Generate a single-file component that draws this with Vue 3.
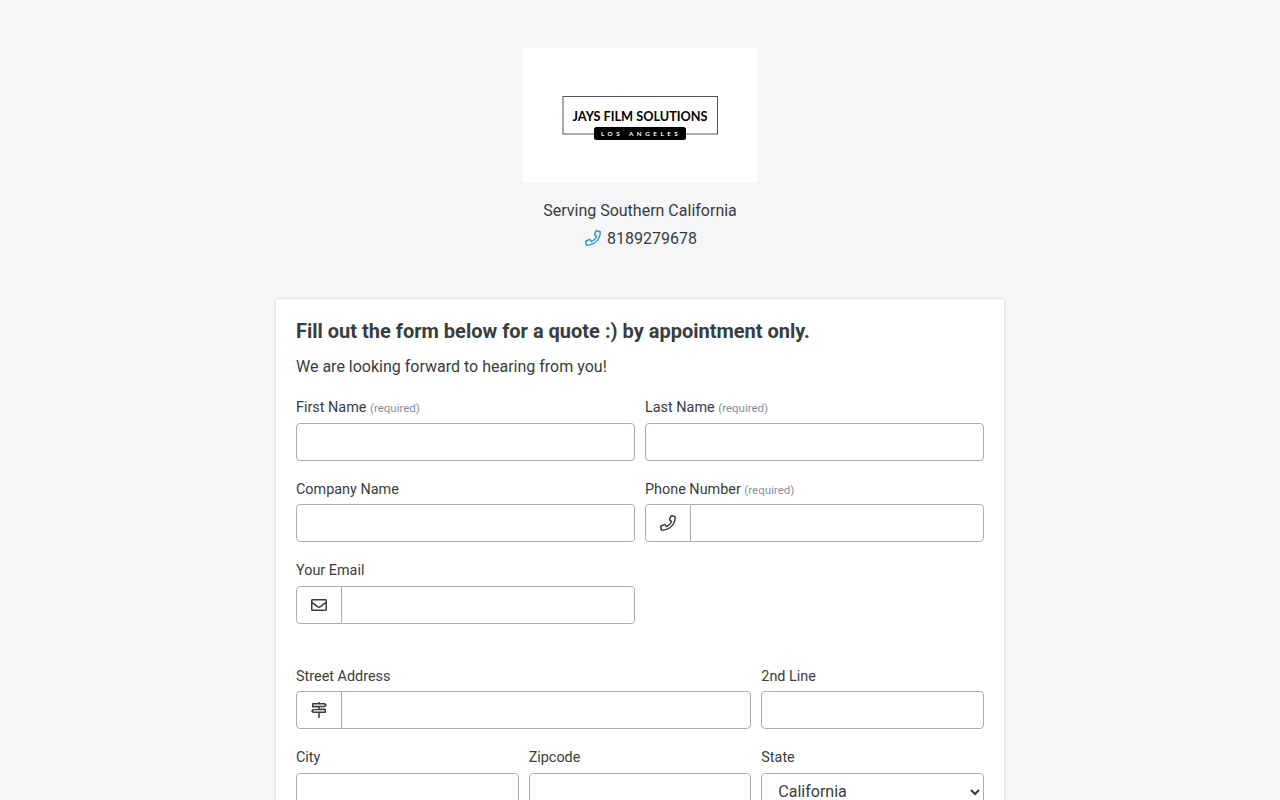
<template>
  <div class="page">
    <header class="brand">
      <svg class="logo" viewBox="0 0 236 135" role="img" aria-label="Jays Film Solutions">
        <rect width="236" height="135" fill="#fff" />
        <rect x="41" y="48.5" width="154.5" height="37.5" fill="none" stroke="#555" stroke-width="1" />
        <text x="50.5" y="73" textLength="135" lengthAdjust="spacingAndGlyphs" class="logo-name">JAYS FILM SOLUTIONS</text>
        <rect x="72" y="79" width="92" height="13" rx="2.5" fill="#000" />
        <text x="79" y="88" class="logo-city">LOS</text>
        <text x="107" y="88" class="logo-city">ANGELES</text>
      </svg>
      <div class="line">Serving Southern California</div>
      <div class="line phone">
        <svg class="icon blue" viewBox="0 0 512 512"><path :d="icons.phone" /></svg>
        <span>8189279678</span>
      </div>
    </header>

    <form class="card" @submit.prevent>
      <h1>Fill out the form below for a quote :) by appointment only.</h1>
      <p>We are looking forward to hearing from you!</p>

      <div v-for="(row, i) in rows" :key="i" class="row" :class="{ last: row.gap }">
        <div v-for="f in row.fields" :key="f.name" class="field" :class="'span-' + f.span">
          <label :for="f.name">
            {{ f.label }} <small v-if="f.required">(required)</small>
          </label>
          <select v-if="f.options" :id="f.name" v-model="form[f.name]" class="control">
            <option v-for="o in f.options" :key="o">{{ o }}</option>
          </select>
          <div v-else class="group" :class="{ addon: f.icon }">
            <span v-if="f.icon" class="prepend">
              <svg class="icon" viewBox="0 0 512 512"><path :d="icons[f.icon]" fill-rule="evenodd" /></svg>
            </span>
            <input :id="f.name" v-model="form[f.name]" class="control" type="text" />
          </div>
        </div>
      </div>
    </form>
  </div>
</template>

<script setup>
import { reactive } from "vue";

const icons = {
  phone:
    "M476.5 22.9L382.3 1.2c-21.6-5-43.6 6.2-52.3 26.6l-43.5 101.5c-8 18.6-2.6 40.6 13.1 53.4l40 32.7C311 267.8 267.8 311 215.4 339.5l-32.7-40c-12.8-15.7-34.8-21.1-53.4-13.1L27.7 329.9c-20.4 8.7-31.5 30.7-26.6 52.3l21.7 94.2c4.8 20.9 23.2 35.5 44.6 35.5C312.3 512 512 313.7 512 67.5c0-21.4-14.6-39.8-35.5-44.6zM69.3 464l-20.9-90.7 98.2-42.1 55.7 68.1c98.8-46.4 150.6-98 197-197l-68.1-55.7 42.1-98.2L464 69.3C463 286.9 286.9 463 69.3 464z",
  envelope:
    "M464 64H48C21.49 64 0 85.49 0 112v288c0 26.51 21.49 48 48 48h416c26.51 0 48-21.49 48-48V112c0-26.51-21.49-48-48-48zm0 48v40.805c-22.422 18.259-58.168 46.651-134.587 106.49-16.841 13.247-50.201 45.072-73.413 44.701-23.208.375-56.579-31.459-73.413-44.701C106.18 199.465 70.425 171.067 48 152.805V112h416zM48 400V214.398c22.914 18.251 55.409 43.862 104.938 82.646 21.857 17.205 60.134 55.186 103.062 54.955 42.717.231 80.509-37.199 103.053-54.947 49.528-38.783 82.032-64.401 104.947-82.653V400H48z",
  signs:
    "M232 0h48v32h154c11 0 21 4 28 12l38 40c8 8 8 20 0 28l-38 40c-7 8-17 12-28 12H280v44h168c18 0 32 14 32 32v80c0 18-14 32-32 32H280v160h-48V352H78c-11 0-21-4-28-12l-38-40c-8-8-8-20 0-28l38-40c7-8 17-12 28-12h154v-44H64c-18 0-32-14-32-32V64c0-18 14-32 32-32h168zM80 80v36h340l20-18-20-18zM92 264l-24 20 24 20h340v-40z",
};

const rows = [
  {
    fields: [
      { name: "first", label: "First Name", span: 6, required: true },
      { name: "last", label: "Last Name", span: 6, required: true },
    ],
  },
  {
    fields: [
      { name: "company", label: "Company Name", span: 6 },
      { name: "phone", label: "Phone Number", span: 6, required: true, icon: "phone" },
    ],
  },
  {
    gap: true,
    fields: [{ name: "email", label: "Your Email", span: 6, icon: "envelope" }],
  },
  {
    fields: [
      { name: "street", label: "Street Address", span: 8, icon: "signs" },
      { name: "street2", label: "2nd Line", span: 4 },
    ],
  },
  {
    fields: [
      { name: "city", label: "City", span: 4 },
      { name: "zip", label: "Zipcode", span: 4 },
      { name: "state", label: "State", span: 4, options: ["California", "Nevada", "Oregon"] },
    ],
  },
];

const form = reactive({
  first: "",
  last: "",
  company: "",
  phone: "",
  email: "",
  street: "",
  street2: "",
  city: "",
  zip: "",
  state: "California",
});
</script>

<style>
html,
body {
  margin: 0;
  height: 100%;
  overflow: hidden;
  background: #f4f6f8;
}
</style>

<style scoped>
.page {
  height: 800px;
  overflow: hidden;
  font-family: Roboto, sans-serif;
  font-size: 16px;
  line-height: 24px;
  color: #373d40;
}
.brand {
  display: flex;
  flex-direction: column;
  align-items: center;
  padding-top: 48px;
}
.logo {
  display: block;
  width: 236px;
  height: 135px;
  margin-bottom: 16px;
}
.logo-name {
  font: 700 13.9px Lato, sans-serif;
}
.logo-city {
  font: 700 6.3px Lato, sans-serif;
  letter-spacing: 3.5px;
  fill: #fff;
}
.line {
  margin-bottom: 4px;
}
.phone {
  display: flex;
  align-items: center;
  gap: 6px;
  padding-left: 2px;
}
.icon {
  display: block;
  width: 16px;
  height: 16px;
  fill: currentColor;
}
.blue {
  margin-bottom: 2px;
  color: #3c93cf;
}
.card {
  box-sizing: border-box;
  width: 730px;
  height: 700px;
  margin: 43px auto 0;
  padding: 20px;
  border: 1px solid #e3e5e8;
  border-radius: 4px;
  background: #fff;
  box-shadow: 0 1px 3px rgba(0, 0, 0, 0.08);
}
h1 {
  margin: 0 0 12px;
  font-size: 20px;
  font-weight: 700;
  line-height: 24px;
}
p {
  margin: 0 0 18.2px;
}
.row {
  display: grid;
  grid-template-columns: repeat(12, 1fr);
  column-gap: 10px;
  margin-bottom: 18px;
}
.row.last {
  margin-bottom: 41.6px;
}
.span-4 {
  grid-column: span 4;
}
.span-6 {
  grid-column: span 6;
}
.span-8 {
  grid-column: span 8;
}
label {
  display: block;
  height: 21.6px;
  margin-bottom: 4px;
  font-size: 14.4px;
  line-height: 21.6px;
}
small {
  font-size: 11.5px;
  line-height: 1;
  color: #8490a0;
}
.group {
  display: flex;
}
.control {
  box-sizing: border-box;
  display: block;
  width: 100%;
  min-width: 0;
  height: 38px;
  padding: 6px 12px;
  border: 1px solid #acafb2;
  border-radius: 4px;
  background: #fff;
  color: #373d40;
  font: 16px/24px Roboto, sans-serif;
}
.prepend {
  box-sizing: border-box;
  display: flex;
  flex: none;
  align-items: center;
  justify-content: center;
  width: 46px;
  margin-right: -1px;
  border: 1px solid #acafb2;
  border-radius: 4px 0 0 4px;
}
.addon .control {
  border-radius: 0 4px 4px 0;
}
</style>
